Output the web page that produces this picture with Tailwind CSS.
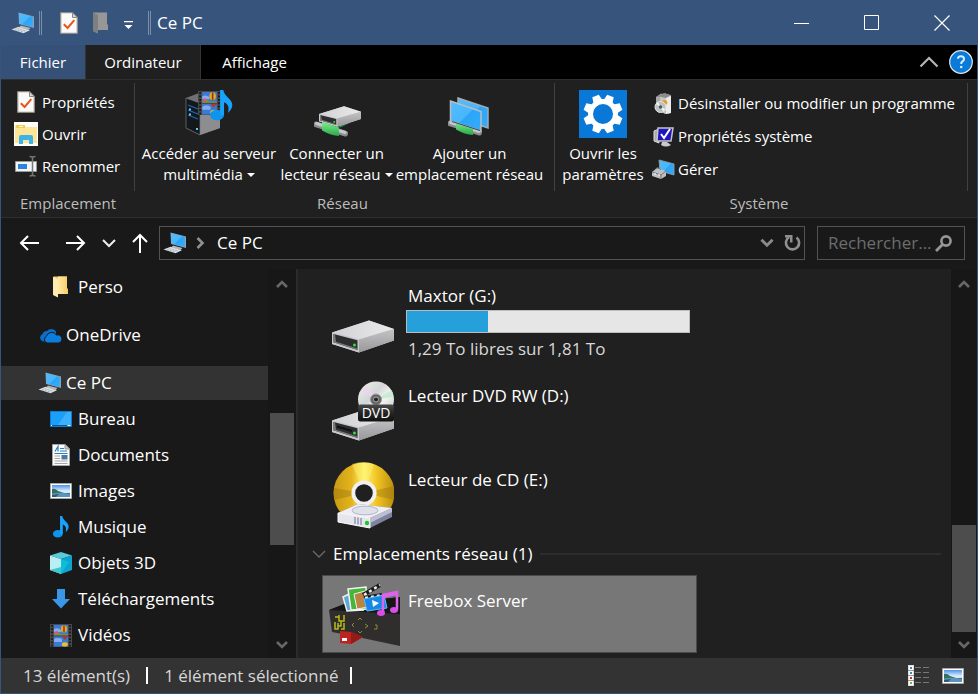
<!DOCTYPE html>
<html lang="fr">
<head>
<meta charset="utf-8">
<meta name="viewport" content="width=device-width, initial-scale=1">
<title>Ce PC</title>
<script src="https://cdn.jsdelivr.net/npm/@tailwindcss/browser@4"></script>
</head>
<body class="bg-[#191919] font-['Open_Sans','Noto_Sans',sans-serif] text-[17px] leading-6 text-white">
<svg class="absolute size-0" aria-hidden="true">
  <defs>
    <linearGradient id="screen" x1="0" y1="0" x2="1" y2="1"><stop offset="0" stop-color="#52bdff"/><stop offset=".5" stop-color="#48b6fc"/><stop offset=".52" stop-color="#2ba5f7"/><stop offset="1" stop-color="#35adfd"/></linearGradient>
    <linearGradient id="driveTop" x1="0" y1="0" x2="1" y2="0"><stop offset="0" stop-color="#d2d2d4"/><stop offset="1" stop-color="#e9e9eb"/></linearGradient>
    <linearGradient id="driveSide" x1="0" y1="0" x2="0" y2="1"><stop offset="0" stop-color="#c4c4c6"/><stop offset="1" stop-color="#98989b"/></linearGradient>
    <linearGradient id="sky" x1="0" y1="0" x2="0" y2="1"><stop offset="0" stop-color="#4d92ee"/><stop offset=".5" stop-color="#dceefb"/><stop offset="1" stop-color="#a9cdea"/></linearGradient>
    <linearGradient id="cable" x1="0" y1="0" x2="0" y2="1"><stop offset="0" stop-color="#7df08a"/><stop offset="1" stop-color="#2aa84a"/></linearGradient>
    <linearGradient id="gold" x1="0" y1="0" x2="1" y2="0"><stop offset="0" stop-color="#c79a14"/><stop offset=".3" stop-color="#e5b41c"/><stop offset=".5" stop-color="#fff27a"/><stop offset=".7" stop-color="#f2c625"/><stop offset="1" stop-color="#bb8d10"/></linearGradient>
    <linearGradient id="silver" x1="0" y1="0" x2="1" y2="1"><stop offset="0" stop-color="#f2f2f2"/><stop offset=".4" stop-color="#d3d6d6"/><stop offset=".6" stop-color="#f3f5f3"/><stop offset="1" stop-color="#b9c0bd"/></linearGradient>
    <linearGradient id="plate" x1="0" y1="0" x2="0" y2="1"><stop offset="0" stop-color="#4a4a4a"/><stop offset=".5" stop-color="#252525"/><stop offset="1" stop-color="#111"/></linearGradient>
    <linearGradient id="folder" x1="0" y1="0" x2="1" y2="0"><stop offset="0" stop-color="#ffe9a6"/><stop offset="1" stop-color="#f8cf69"/></linearGradient>
    <symbol id="pc" viewBox="0 0 24 22">
      <path d="M10 13.500 L19.500 16 L17.500 18 L8 15.500Z" fill="#aeb8bf"/>
      <path d="M7.500 .5 L23 4.600 V16 L8 12Z" fill="#8fa3b0"/>
      <path d="M8 1.200 L21.800 5 V15 L8.600 11.400Z" fill="url(#screen)"/>
      <path d="M.5 17.500 L7.500 14.800 L19 18.200 L12.500 21.300Z" fill="#d7dde1"/>
      <path d="M4 17.600 L12 20 M6.500 16.600 L14.500 19" stroke="#9aa4ab" stroke-width=".7" stroke-dasharray="2 1"/>
    </symbol>
    <symbol id="check" viewBox="0 0 18 22">
      <path d="M.75 .75 H12.500 L17.250 5.500 V21.250 H.75Z" fill="#fafafa" stroke="#9b948e" stroke-width="1.200"/>
      <path d="M12.500 .75 V5.500 H17.250Z" fill="#d9d5d1" stroke="#8e8781"/>
      <path d="M3.800 12.300 L7.600 16 L14.300 8.200" fill="none" stroke="#e8561c" stroke-width="2"/>
    </symbol>
    <symbol id="folderv" viewBox="0 0 15 22">
      <path d="M1 .5 H14 V12.500 H15 V18 H1Z" fill="#f4c963"/><path d="M5 .5 H14 V18 H5Z" fill="url(#folder)"/>
      <path d="M0 .5 L5 3 V21.500 L0 19Z" fill="#ffebb0"/>
    </symbol>
    <symbol id="note" viewBox="0 0 17 23">
      <ellipse cx="5.200" cy="18.600" rx="5.200" ry="3.900" fill="#0c94ee"/>
      <path d="M7.500 0 H9.800 C10.500 5 16.500 6.500 16.500 11 C16.500 14 14.500 16 13.300 17 C14.300 13 13.800 10.500 10.400 9 V18.600 H7.500Z" fill="#17a3fb"/>
    </symbol>
    <symbol id="film" viewBox="0 0 22 23">
      <path d="M0 0 H22 V23 H0Z" fill="#47494b"/>
      <path d="M2 1 V23 M20 1 V23" stroke="#151515" stroke-width="1.700" stroke-dasharray="1.700 1.600"/>
      <path d="M4 1 H18 V11.300 H4Z M4 12.500 H18 V22.500 H4Z" fill="#3b79d9"/>
      <path d="M4 5 Q8 3 11 6 V8 H4Z M4 15 Q8 13 12 15 V18 H4Z" fill="#83aeea"/>
      <ellipse cx="14" cy="5" rx="3.200" ry="3.700" fill="#e1a81e"/><path d="M14 1.500 V8.500" stroke="#912f20" stroke-width="1.400"/>
      <path d="M4 8.500 H9 L11 10 H18 V11.300 H4Z" fill="#7c9425"/><circle cx="6.500" cy="8.600" r="1.700" fill="#e74a91"/>
      <ellipse cx="14.800" cy="20.400" rx="3" ry="2.100" fill="#f1bd29"/><path d="M12 12.500 H18 L15 16Z" fill="#b9342d"/>
    </symbol>
    <symbol id="photo" viewBox="0 0 22 16">
      <path d="M.5 .5 H21.500 V15.500 H.5Z" fill="#fff" stroke="#a7a7a7"/>
      <path d="M2 2 H20 V14 H2Z" fill="url(#sky)"/>
      <path d="M2 6 Q5 5 8 8 L14 10 H20 V11 H2Z" fill="#34735a"/>
      <path d="M2 10.500 Q10 9 20 11 V14 H2Z" fill="#5a93bd"/><path d="M2 12 L9 11 L6 14 H2Z" fill="#305f68"/>
    </symbol>
    <symbol id="drive" viewBox="0 0 62 33">
      <path d="M0 12.500 L37 .5 L62 9 V20.500 L27 32.500 L0 24Z" fill="#bbb"/>
      <path d="M0 12.500 L37 .5 L62 9 L27 19.500Z" fill="url(#driveTop)"/>
      <path d="M27 19.500 L62 9 V20.500 L27 32.500Z" fill="url(#driveSide)"/>
      <path d="M0 12.500 L27 19.500 V32.500 L0 24Z" fill="#c9c9cb"/>
      <path d="M1.500 14 L25.500 20.300 V30 L1.500 22.300Z" fill="#2c2e2f"/>
      <path d="M1.500 22.300 L25.500 30 V28.500 L4 21.800 L3 14.400 L1.500 14Z" fill="#77797a"/>
      <circle cx="22.500" cy="25" r="1.500" fill="#35e03c"/>
    </symbol>
    <symbol id="chev" viewBox="0 0 12 9"><path d="M1 1.500 L6 6.500 L11 1.500" fill="none" stroke="currentColor" stroke-width="2.600"/></symbol>
    <symbol id="plug" viewBox="0 0 34 16">
      <path d="M2.500 3.500 L31 12.500" stroke="#8a8d8f" stroke-width="6" stroke-linecap="round"/>
      <path d="M2.500 2.500 L31 11.500" stroke="#c5c8ca" stroke-width="3" stroke-linecap="round"/>
      <path d="M8 1 L25 6.500 V15 Q17 14.500 8 9.500Z" fill="url(#cable)"/>
    </symbol>
  </defs>
</svg>

<div class="flex min-h-screen flex-col border-x border-b border-[#37547d]">

  <header class="flex h-[45px] shrink-0 items-center bg-[#37547d]">
    <svg class="ml-[10px] h-[22px] w-6"><use href="#pc"/></svg>
    <span class="ml-1 h-6 w-[3px] border-x border-[#7c8ea8]"></span>
    <button class="ml-[18px]" aria-label="Propriétés"><svg class="h-[22px] w-[18px]"><use href="#check"/></svg></button>
    <button class="ml-[15px]" aria-label="Nouveau dossier"><svg class="h-[22px] w-[15px]" viewBox="0 0 15 22"><path d="M0 .5 H14 V12.500 H15 V18 H5 V21.500 L0 19Z" fill="#979797"/><path d="M0 .5 L5 3 V21.500 L0 19Z" fill="#7e7f80"/></svg></button>
    <button class="ml-4 pt-1" aria-label="Personnaliser la barre d'accès rapide"><svg class="h-2 w-[9px]" viewBox="0 0 9 8"><path d="M0 0 H9 V1.200 H0Z M.5 4 H8.500 L4.500 8Z" fill="#fff"/></svg></button>
    <span class="ml-[15px] h-6 w-[3px] border-x border-[#7c8ea8]"></span>
    <h1 class="ml-[6px] grow">Ce PC</h1>
    <button class="flex w-[70px] justify-center" aria-label="Réduire"><svg class="h-4 w-4" viewBox="0 0 16 16"><path d="M0 8.500 H15" stroke="#fff"/></svg></button>
    <button class="flex w-[70px] justify-center" aria-label="Agrandir"><svg class="h-4 w-4" viewBox="0 0 16 16"><path d="M.5 .5 H14.500 V14.500 H.5Z" fill="none" stroke="#fff"/></svg></button>
    <button class="flex w-[70px] justify-center" aria-label="Fermer"><svg class="h-4 w-4" viewBox="0 0 16 16"><path d="M.5 .5 L15.500 15.500 M15.500 .5 L.5 15.500" stroke="#fff" stroke-width="1.200"/></svg></button>
  </header>

  <nav class="flex h-[34px] shrink-0 items-stretch bg-black text-[15px]">
    <button class="w-21 bg-[#365178]">Fichier</button>
    <button class="w-[116px] border-x border-[#333] bg-[#202020]">Ordinateur</button>
    <button class="w-[107px]">Affichage</button>
    <span class="grow"></span>
    <button class="mr-[10px]" aria-label="Réduire le ruban"><svg class="h-3 w-5" viewBox="0 0 20 12"><path d="M1.500 10.500 L10 2 L18.500 10.500" fill="none" stroke="#b5b5b5" stroke-width="2.200"/></svg></button>
    <button class="mr-1" aria-label="Aide"><svg class="size-6" viewBox="0 0 24 24"><circle cx="12" cy="12" r="11.300" fill="#0a7ad9" stroke="#e5e5e5" stroke-width="1.200"/><path d="M9 8.700 Q9 6.300 12 6.300 Q15 6.300 15 8.900 Q15 10.400 13.200 11.600 Q12.200 12.300 12.200 14" fill="none" stroke="#d6ecff" stroke-width="2"/><circle cx="12.200" cy="17" r="1.300" fill="#d6ecff"/></svg></button>
  </nav>

  <section class="flex h-[139px] shrink-0 border-y border-[#2f2f2f] bg-[#202020] pt-[3px] text-[15px] leading-[21px]">
    <div class="flex w-[134px] flex-col">
      <div class="flex h-[108px] flex-col border-r border-[#414141] pt-[3px] pl-[13px]">
        <button class="flex h-8 items-center gap-1"><span class="flex w-6 justify-center"><svg class="h-[22px] w-[18px]"><use href="#check"/></svg></span>Propriétés</button>
        <button class="flex h-8 items-center gap-1"><svg class="size-6" viewBox="0 0 24 24"><path d="M0 0H24V24H0Z" fill="#fff"/><path d="M1 3 H10 L12 5 H23 V21 H1Z" fill="#ffe696"/><path d="M2 3 H11 V6 H2Z" fill="#f3cd4a"/><path d="M5 4.500H9" stroke="#fff"/><path d="M5 22 V15 Q5 13 7 13 H17 Q19 13 19 15 V22 H15 V18 H9 V22Z" fill="#3cb4ea"/></svg>Ouvrir</button>
        <button class="flex h-8 items-center gap-1"><svg class="size-6" viewBox="0 0 24 24"><path d="M1.500 7.500 H22.500 V17.500 H1.500Z" fill="#f4f4f4" stroke="#999"/><path d="M4 10 H13 V15 H4Z" fill="#2785df"/><path d="M15.500 2.500 Q18.500 2.500 18.500 4 Q18.500 2.500 21.500 2.500 M18.500 3.500 V21 M15.500 22 Q18.500 22 18.500 20.500 Q18.500 22 21.500 22" fill="none" stroke="#777" stroke-width="1.500"/></svg>Renommer</button>
      </div>
      <h2 class="pt-[2px] text-center text-[#bdbdbd]">Emplacement</h2>
    </div>
    <div class="flex w-[420px] flex-col">
      <div class="flex h-[108px] items-start border-r border-[#414141] pt-[7px] pl-[5px] whitespace-nowrap">
        <button class="flex w-[138px] flex-col items-center gap-[5px]">
          <svg class="size-12" viewBox="0 0 48 48"><path d="M1 8 L14 3 L35 8 V38 L15 45 L1 38Z" fill="#6f7073"/><path d="M15 13 L35 8 V38 L15 45Z" fill="#8b8d91"/><path d="M1 8 L15 13 V45 L1 38Z" fill="#15181b" stroke="#77797c" stroke-width=".7"/><path d="M3 15 L13 19 M3 20 L13 24 M3 25 L13 29" stroke="#1769bd" stroke-width="1.200"/><path d="M4 19.500h2 M4 24.500h2 M11 39h2" stroke="#59c9ff" stroke-width="2"/><svg x="13" y="1" width="23" height="24"><use href="#film"/></svg><svg x="25" y="0" width="23" height="31"><use href="#note"/></svg></svg>
          <span>Accéder au serveur<br>multimédia<svg class="ml-1 inline h-1 w-2 align-[3px]" viewBox="0 0 8 4"><path d="M0 0H8L4 4Z" fill="#fff"/></svg></span>
        </button>
        <button class="flex w-[117px] flex-col items-center gap-[5px]">
          <svg class="size-12" viewBox="0 0 48 48"><path d="M26 36 L36 31" stroke="#198b55" stroke-width="4"/><svg x="6" y="16" width="42" height="21" preserveAspectRatio="none" viewBox="0 0 62 33"><use href="#drive"/></svg><svg x="1" y="31" width="34" height="16"><use href="#plug"/></svg></svg>
          <span>Connecter un<br>lecteur réseau<svg class="ml-1 inline h-1 w-2 align-[3px]" viewBox="0 0 8 4"><path d="M0 0H8L4 4Z" fill="#fff"/></svg></span>
        </button>
        <button class="flex w-[149px] flex-col items-center gap-[5px]">
          <svg class="size-12" viewBox="0 0 48 48"><path d="M12 8 L42 18 V38 L12 28Z" fill="url(#screen)" stroke="#a3acb2" stroke-width="1.500"/><svg x="2" y="30" width="34" height="16"><use href="#plug"/></svg><path d="M4.500 11 L35 21.500 V41 L4.500 31Z" fill="url(#screen)" stroke="#b8bec2" stroke-width="1.500"/><path d="M6 31.500 L34 40.500" stroke="#39474f"/></svg>
          <span>Ajouter un<br>emplacement réseau</span>
        </button>
      </div>
      <h2 class="pt-[2px] pr-[5px] text-center text-[#bdbdbd]">Réseau</h2>
    </div>
    <div class="flex w-[413px] flex-col">
      <div class="flex h-[108px] items-start border-r border-[#414141] pl-[5px] whitespace-nowrap">
        <button class="flex w-[86px] flex-col items-center gap-[5px] pt-[7px]">
          <svg class="size-12" viewBox="0 0 48 48"><path d="M0 0H48V48H0Z" fill="#0a78d7"/><g fill="#fff" transform="rotate(22.500 24 24)"><path id="t" d="M20.500 4.500 H27.500 L29 12 H19Z"/><use href="#t" transform="rotate(45 24 24)"/><use href="#t" transform="rotate(90 24 24)"/><use href="#t" transform="rotate(135 24 24)"/><use href="#t" transform="rotate(180 24 24)"/><use href="#t" transform="rotate(225 24 24)"/><use href="#t" transform="rotate(270 24 24)"/><use href="#t" transform="rotate(315 24 24)"/></g><circle cx="24" cy="24" r="12.500" fill="none" stroke="#fff" stroke-width="5"/></svg>
          <span>Ouvrir les<br>paramètres</span>
        </button>
        <div class="flex flex-col pt-1 pl-[6px]">
          <button class="flex h-[33px] items-center gap-[2px]"><svg class="size-6" viewBox="0 0 24 24"><path d="M4 5 L9 1.500 L13 3 V20 L4 17Z" fill="#a9a9a9"/><path d="M8 4.500 L13 1.500 L19 3.500 V21 L13 22 L8 19Z" fill="#c6c6c6"/><path d="M14 6 L19 4 V21 L14 22Z" fill="#ececec"/><path d="M4 5 L12 1 L19 3 L14 6 L8 4.800Z" fill="#8c8c8c"/><path d="M10 9 Q15 6 15.500 11 L12 16Z" fill="#ed9c22"/><circle cx="8.500" cy="15" r="5.500" fill="#b9c3c1" stroke="#e4e4e4"/><path d="M8.500 15L4 12L6 10.300Z M8.500 15L13 17L11.500 19.500Z" fill="#f7f7f7"/><circle cx="8.500" cy="15" r="1.700" fill="#555"/></svg>Désinstaller ou modifier un programme</button>
          <button class="flex h-[33px] items-center gap-[2px]"><svg class="size-6" viewBox="0 0 24 24"><path d="M2 6 L7 4 V18 L2 16Z" fill="#aaa" stroke="#ddd"/><path d="M6 3 H21 L19 16 H5Z" fill="#2016be" stroke="#c5c5c5" stroke-width="1.500"/><path d="M9 9 L12 13 L18 4" fill="none" stroke="#fff" stroke-width="2"/><path d="M10 17 H15 L19 20 Q14 23 9 20Z" fill="#c9c9c9"/></svg>Propriétés système</button>
          <button class="flex h-[33px] items-center gap-[2px]"><svg class="size-6" viewBox="0 0 24 24"><path d="M7 2 L22 6 V17 L8 13Z" fill="url(#screen)" stroke="#8598a3"/><path d="M0 14 L5 10 L14 13 V18 L9 21 L0 18Z" fill="#bdc1c4"/><path d="M0 14 L9 17 L14 13 M9 17 V21 M4 11 Q5 8 9 12" stroke="#74797d" fill="none"/><path d="M3 15v2M7 16v2" stroke="#fff"/></svg>Gérer</button>
        </div>
      </div>
      <h2 class="pt-[2px] pr-[5px] text-center text-[#bdbdbd]">Système</h2>
    </div>
  </section>

  <div class="flex h-[51px] shrink-0 items-center pr-3 pb-px pl-[18px]">
    <button aria-label="Précédent"><svg class="h-4 w-5" viewBox="0 0 20 16"><path d="M20 8 H2 M9 1 L2 8 L9 15" fill="none" stroke="#fff" stroke-width="2"/></svg></button>
    <button class="ml-[27px]" aria-label="Suivant"><svg class="h-4 w-5" viewBox="0 0 20 16"><path d="M0 8 H18 M11 1 L18 8 L11 15" fill="none" stroke="#fff" stroke-width="2"/></svg></button>
    <button class="ml-4" aria-label="Emplacements récents"><svg class="h-[9px] w-[14px]" viewBox="0 0 14 9"><path d="M1 1 L7 7 L13 1" fill="none" stroke="#eee" stroke-width="2"/></svg></button>
    <button class="ml-4" aria-label="Dossier parent"><svg class="h-5 w-4" viewBox="0 0 16 20"><path d="M8 20 V2 M1 9 L8 2 L15 9" fill="none" stroke="#fff" stroke-width="2"/></svg></button>
    <div class="ml-[11px] flex h-[34px] grow items-center border border-[#535353]">
      <svg class="ml-[3px] h-[22px] w-6"><use href="#pc"/></svg>
      <svg class="ml-[9px] h-3 w-[9px]" viewBox="0 0 9 12"><path d="M1.500 1 L6.500 6 L1.500 11" fill="none" stroke="#909090" stroke-width="2.600"/></svg>
      <a href="#" class="ml-3 grow">Ce PC</a>
      <button aria-label="Historique"><svg class="h-[10px] w-[14px] text-[#8b8b8b]"><use href="#chev"/></svg></button>
      <button class="ml-[10px] mr-[3px]" aria-label="Actualiser"><svg class="h-[18px] w-[17px]" viewBox="0 0 17 18"><path d="M12.500 3.500 A6.600 6.600 0 1 1 5 3.200" fill="none" stroke="#8f8f8f" stroke-width="2.600"/><path d="M1 1 H8.500 V8.500 H6 V3.500 H1Z" fill="#8f8f8f"/></svg></button>
    </div>
    <label class="ml-3 flex h-[34px] w-37 items-center border border-[#535353] pr-3 pl-[10px]">
      <input type="text" aria-label="Rechercher" placeholder="Rechercher..." class="w-0 min-w-0 grow bg-transparent outline-none placeholder:text-[#6d6d6d]">
      <svg class="ml-1 h-[17px] w-[17px]" viewBox="0 0 17 17"><circle cx="11" cy="6" r="4.600" fill="none" stroke="#969696" stroke-width="2.600"/><path d="M7.500 9.500 L1 16" stroke="#969696" stroke-width="2.800"/></svg>
    </label>
  </div>

  <div class="flex grow">
    <aside class="w-[267px] shrink-0">
      <ul>
        <li><a href="#" class="flex h-9 items-center pl-[49px]"><span class="mr-[6px] flex w-[22px] justify-start pl-[3px]"><svg class="h-[22px] w-[15px]"><use href="#folderv"/></svg></span>Perso</a></li>
        <li class="mt-3"><a href="#" class="flex h-9 items-center gap-1 pl-[38px]"><svg class="h-[15px] w-[23px]" viewBox="0 0 23 15"><path d="M4 13.500 A4 4 0 0 1 3.500 6 A4.500 4.500 0 0 1 8 3 A5.500 5.500 0 0 1 17 3.500 L17 6 L6 13.500Z" fill="#0a6fc8"/><path d="M8 15 A3.600 3.600 0 0 1 7.500 8.300 A5.500 5.500 0 0 1 17.500 7 A4 4 0 0 1 20 15Z" fill="#0b7ddc" stroke="#191919"/></svg>OneDrive</a></li>
        <li class="mt-3 py-px"><a href="#" aria-current="page" class="flex h-[34px] items-center gap-1 bg-[#333] pl-[37px]"><svg class="h-[22px] w-6"><use href="#pc"/></svg>Ce PC</a></li>
        <li><a href="#" class="flex h-9 items-center gap-[6px] pl-[49px]"><svg class="h-4 w-[22px]" viewBox="0 0 22 16"><path d="M.5 .5H21.500V15.500H.5Z" fill="#1aa0fa" stroke="#0b7fd4"/><path d="M8 14L17 1H21V14Z" fill="#3db0ff"/><path d="M1 14.500H21" stroke="#0a5896"/><path d="M1 14.500h1M17.500 14.500h3" stroke="#fff"/></svg>Bureau</a></li>
        <li><a href="#" class="flex h-9 items-center gap-[6px] pl-[49px]"><svg class="h-[22px] w-[22px]" viewBox="0 0 22 22"><path d="M2.500 .5H15L19.500 5V21.500H2.500Z" fill="#fbfbfb" stroke="#a5a5a5"/><path d="M15 .5V5H19.500Z" fill="#ccc" stroke="#999"/><path d="M5 7.500L8 2.500V7.500M10 4.500H14M10 7H17M4.500 9.500H17.500" stroke="#2a7fc0" fill="none" stroke-width="1.200"/><path d="M4.500 12H10M4.500 14.500H10M4.500 17H17.500M4.500 19.500H17.500" stroke="#a7a7a7"/><path d="M11.500 11H17.500V15.500H11.500Z" fill="#4b79a4"/></svg>Documents</a></li>
        <li><a href="#" class="flex h-9 items-center gap-[6px] pl-[49px]"><svg class="h-4 w-[22px]"><use href="#photo"/></svg>Images</a></li>
        <li><a href="#" class="flex h-9 items-center gap-[6px] pl-[49px]"><svg class="h-[22px] w-[22px]"><use href="#note"/></svg>Musique</a></li>
        <li><a href="#" class="flex h-9 items-center gap-[6px] pl-[49px]"><svg class="h-[22px] w-[22px]" viewBox="0 0 22 22"><path d="M0 3.500L11 0L22 3.500L11 7Z" fill="#56cbdc"/><path d="M0 3.500L11 7V22L0 18Z" fill="#b9eff2"/><path d="M11 7L22 3.500V18L11 22Z" fill="#0fa3d3"/><path d="M11 7V22L19 10Z" fill="#0bbfd6"/><path d="M0 18L11 15V22Z" fill="#41c6d1"/></svg>Objets 3D</a></li>
        <li><a href="#" class="flex h-9 items-center gap-[6px] pl-[49px]"><svg class="h-[22px] w-[22px]" viewBox="0 0 22 22"><path d="M7 1H15V11H20L11 20.500L2 11H7Z" fill="#3a96e8"/></svg>Téléchargements</a></li>
        <li><a href="#" class="flex h-9 items-center gap-[6px] pl-[49px]"><svg class="h-[23px] w-[22px]"><use href="#film"/></svg>Vidéos</a></li>
      </ul>
    </aside>
    <div class="flex w-7 shrink-0 flex-col items-center bg-[#171717]" aria-hidden="true">
      <svg class="my-[10px] h-[10px] w-3 shrink-0 rotate-180 text-[#686868]"><use href="#chev"/></svg>
      <div class="grow-114"></div><div class="w-6 grow-132 bg-[#4d4d4d]"></div><div class="grow-83"></div>
      <svg class="mt-3 mb-2 h-[10px] w-3 shrink-0 text-[#686868]"><use href="#chev"/></svg>
    </div>
    <main class="min-w-0 grow border-l-2 border-[#2b2b2b] bg-[#202020] pt-[17px] pr-[10px] pl-6">
      <article class="flex h-[78px] w-[375px] max-w-full">
        <svg class="mt-[34px] ml-[10px] h-[33px] w-[62px] shrink-0"><use href="#drive"/></svg>
        <div class="ml-3 grow pr-[7px]">
          <h3 class="-mt-[2px] pl-[2px]">Maxtor (G:)</h3>
          <div role="meter" aria-label="Espace utilisé" aria-valuenow="29" aria-valuemin="0" aria-valuemax="100" class="mt-[2px] h-[23px] border border-[#bcbcbc] bg-[#e6e6e6]"><div class="h-full bg-[#26a0da]" style="width:28.7%"></div></div>
          <p class="mt-1 pl-[2px] text-[#d8d8d8]">1,29 To libres sur 1,81 To</p>
        </div>
      </article>
      <article class="mt-[6px] flex h-[78px] w-[375px] max-w-full">
        <svg class="mt-[11px] ml-[10px] h-[60px] w-[62px] shrink-0" viewBox="0 0 62 60"><svg y="27" width="62" height="33"><use href="#drive"/></svg><path d="M5 45.500L20 50" stroke="#111" stroke-width="2"/><circle cx="44" cy="18.500" r="18" fill="url(#silver)"/><path d="M44 18.500L29 10L35 4Z" fill="#efd3ee" opacity=".7"/><path d="M44 18.500L60 9L61 16Z" fill="#bfe7cb" opacity=".8"/><circle cx="44" cy="18.500" r="5.500" fill="#666" stroke="#999"/><circle cx="44" cy="18.500" r="2.500" fill="#222" stroke="#aaa"/><rect x="26" y="23.500" width="36" height="17" rx="2.500" fill="url(#plate)"/><text x="44" y="37" text-anchor="middle" font-family="Open Sans" font-size="14" fill="#fff">DVD</text></svg>
        <h3 class="ml-[14px] pt-[14px]">Lecteur DVD RW (D:)</h3>
      </article>
      <article class="mt-[6px] flex h-[78px] w-[375px] max-w-full">
        <svg class="mt-2 ml-[10px] h-[68px] w-[62px] shrink-0" viewBox="0 0 62 68"><circle cx="32" cy="31" r="30.500" fill="url(#gold)"/><path d="M32 31L20 2Q32 -2 42 2Z" fill="#fff36b" opacity=".45"/><path d="M32 31L2 26V38Z M32 31L62 24V38Z" fill="#99720a" opacity=".4"/><circle cx="32" cy="31" r="10.700" fill="#202020" stroke="#f0f0f0" stroke-width="3.800"/><path d="M6 51L26 42L60 46V55L38 66L6 60Z" fill="#7d83a0"/><path d="M6 51L26 42L60 46L38 56Z" fill="#eeeef4"/><ellipse cx="33" cy="48.500" rx="13" ry="4.300" fill="#dfe0ea" stroke="#b6b8c7"/><path d="M6 51L38 56V66L6 60Z" fill="#e5e5eb" stroke="#fafafa"/><path d="M23 55V62M26 55.500V62.500M29 56V63" stroke="#6872a0"/><circle cx="35" cy="61" r="2.200" fill="#19c928"/><path d="M38 56L60 46V50L38 61Z" fill="#bbbfd0"/></svg>
        <h3 class="ml-[14px] pt-[14px]">Lecteur de CD (E:)</h3>
      </article>
      <div class="-ml-[10px] flex h-[43px] items-center">
        <button class="flex items-center gap-[7px]"><svg class="h-2 w-[14px]" viewBox="0 0 14 8"><path d="M1 1L7 7L13 1" fill="none" stroke="#6a6a6a" stroke-width="1.300"/></svg>Emplacements réseau (1)</button>
        <span class="ml-2 h-[2px] grow bg-[#2d2d2d]"></span>
      </div>
      <article class="flex h-[78px] w-[375px] max-w-full border border-[#4b4b4b] bg-[#777]">
        <svg class="mt-[7px] ml-[6px] h-16 w-[71px] shrink-0" viewBox="0 0 71 64"><path d="M0 27L18 20L71 14V63L24 53L3 49Z" fill="#302e2d"/><path d="M0 27L18 20L71 14V31Z" fill="#161616"/><path d="M14 14L22 10L34 27L18 28Z" fill="#60a7d4" stroke="#eee" stroke-width="1.500"/><path d="M19 6L37 4L38 26L22 27Z" fill="#44b638" stroke="#f4f4f4" stroke-width="1.500"/><path d="M25 11L36 8L39 24L28 26Z" fill="#ba8340" stroke="#eee"/><path d="M34 12L51 2M35 15L53 12" stroke="#181818" stroke-width="4"/><path d="M35 12L51 2M36 15L53 12" stroke="#eee" stroke-width="2.500" stroke-dasharray="3 3"/><path d="M35 16L55 12L58 25L38 28Z" fill="#1689e8" stroke="#60bdff"/><path d="M43 17L50 20L44 24Z" fill="#fff"/><path d="M54 30V12L68 9V27" fill="none" stroke="#dd62ec" stroke-width="2.500"/><path d="M54 13L68 10" stroke="#dd62ec" stroke-width="4"/><ellipse cx="52" cy="30" rx="4" ry="3" fill="#d94de9"/><ellipse cx="65" cy="27" rx="4" ry="3" fill="#d94de9"/><path d="M6 34H10V38H15V32M10 32V36M6 39V46H9V40M9 43H12V38M12 46H15V40" fill="none" stroke="#b7bc18" stroke-width="1.500"/><path d="M29 37L31 35L33 37M25 40L23 42L25 44M36 41L39 43L36 45M29 48L31 50L33 48M46 42H48V46H45" fill="none" stroke="#8a8c2e"/><path d="M11 48L22 49L34 54L22 61L11 60Z" fill="#bd2420"/><path d="M22 49L34 54L22 61Z" fill="#981a18"/><path d="M13 55H18V58H13Z" fill="#fff"/></svg>
        <h3 class="ml-2 pt-[13px]">Freebox Server</h3>
      </article>
    </main>
    <div class="flex w-[26px] shrink-0 flex-col items-center bg-[#171717]" aria-hidden="true">
      <svg class="my-[10px] h-[10px] w-3 shrink-0 rotate-180 text-[#686868]"><use href="#chev"/></svg>
      <div class="grow-226"></div><div class="w-6 grow-107 bg-[#4d4d4d]"></div>
      <svg class="mt-2 mb-2 h-[10px] w-3 shrink-0 text-[#686868]"><use href="#chev"/></svg>
    </div>
  </div>

  <footer class="flex h-[35px] shrink-0 items-center bg-[#333] pr-[13px] pl-[22px] text-[#d6d6d6]">
    <span>13 élément(s)</span>
    <span class="mx-4 h-[17px] w-[2px] bg-white"></span>
    <span>1 élément sélectionné</span>
    <span class="ml-3 h-[17px] w-[2px] bg-white"></span>
    <span class="grow"></span>
    <button aria-label="Détails"><svg class="h-[22px] w-[22px]" viewBox="0 0 22 22"><path d="M0 0H6V21H0Z" fill="#ddd"/><path d="M1 1h4v4H1Z M1 6h4v4H1Z M1 11h4v4H1Z M1 16h4v4H1Z" fill="#fff"/><path d="M2 2h2v2H2Z M2 7h2v2H2Z" fill="#3b87a6"/><path d="M2 12h2v2H2Z" fill="#c43319"/><path d="M2 17h2v2H2Z" fill="#8d9e68"/><path d="M0 5.500H6M0 10.500H6M0 15.500H6" stroke="#999"/><path d="M7 2.500H13M15 2.500H21M7 7.500H13M15 7.500H21M7 12.500H13M15 12.500H21M7 17.500H13M15 17.500H21" stroke="#777"/></svg></button>
    <button class="ml-3" aria-label="Grandes icônes"><svg class="h-4 w-[22px]"><use href="#photo"/></svg></button>
  </footer>
</div>
</body>
</html>
